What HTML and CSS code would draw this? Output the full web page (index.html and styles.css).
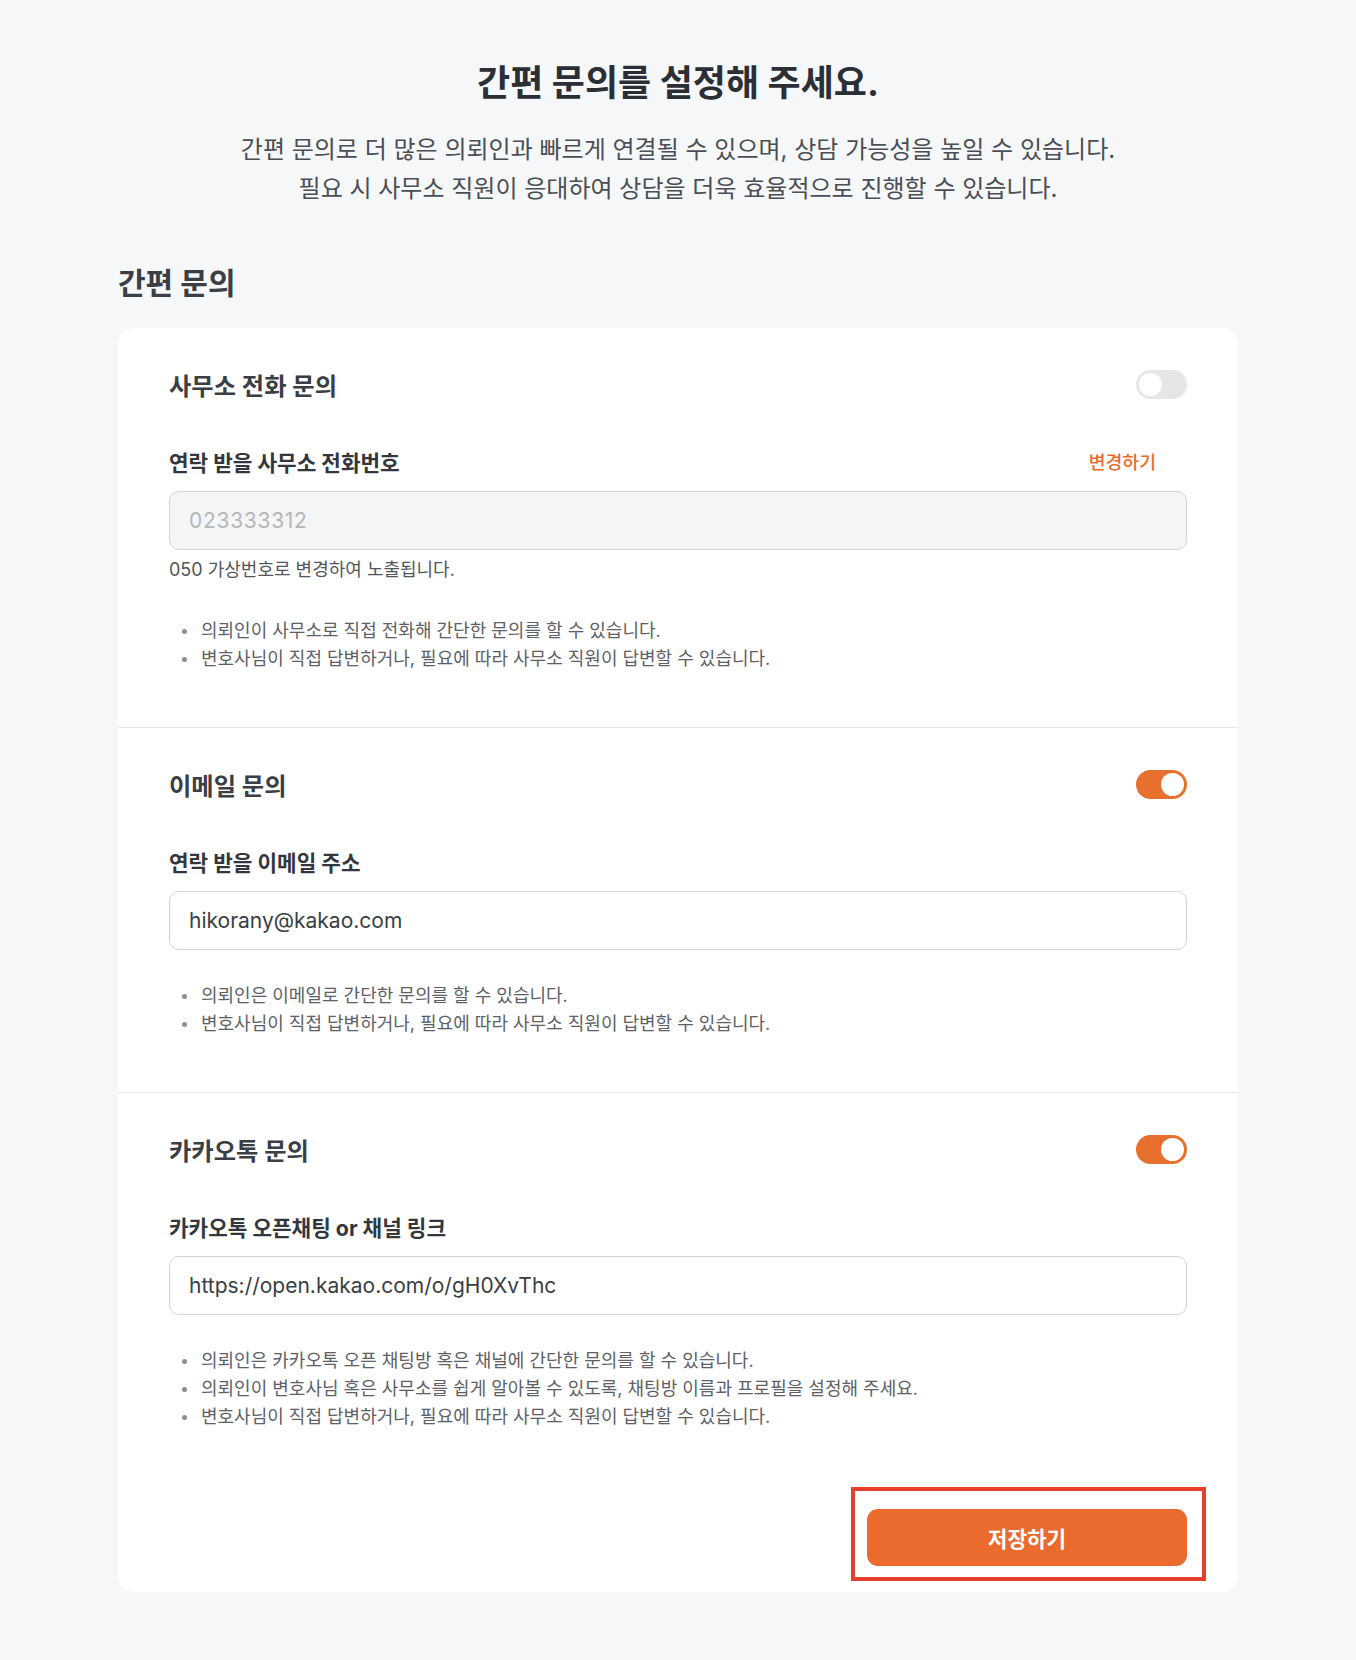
FILE: index.html
```html
<!DOCTYPE html>
<html lang="ko">
<head>
  <meta charset="UTF-8">
  <meta name="viewport" content="width=device-width, initial-scale=1.0">
  <title>간편 문의 설정</title>
  <link rel="stylesheet" href="styles.css">
</head>
<body>
  <main class="page">
    <header class="intro">
      <h1>간편 문의를 설정해 주세요.</h1>
      <p>간편 문의로 더 많은 의뢰인과 빠르게 연결될 수 있으며, 상담 가능성을 높일 수 있습니다.<br>
        필요 시 사무소 직원이 응대하여 상담을 더욱 효율적으로 진행할 수 있습니다.</p>
    </header>

    <h2 class="group-title">간편 문의</h2>

    <section class="card">
      <div class="channel">
        <div class="channel-head">
          <h3>사무소 전화 문의</h3>
          <span class="toggle"></span>
        </div>
        <div class="field-label">
          <span>연락 받을 사무소 전화번호</span>
          <a href="#" class="change-link">변경하기</a>
        </div>
        <input class="field-input" type="text" value="023333312" disabled>
        <p class="helper">050 가상번호로 변경하여 노출됩니다.</p>
        <ul class="notes">
          <li>의뢰인이 사무소로 직접 전화해 간단한 문의를 할 수 있습니다.</li>
          <li>변호사님이 직접 답변하거나, 필요에 따라 사무소 직원이 답변할 수 있습니다.</li>
        </ul>
      </div>

      <div class="channel">
        <div class="channel-head">
          <h3>이메일 문의</h3>
          <span class="toggle on"></span>
        </div>
        <div class="field-label">
          <span>연락 받을 이메일 주소</span>
        </div>
        <input class="field-input" type="text" value="hikorany@kakao.com">
        <ul class="notes">
          <li>의뢰인은 이메일로 간단한 문의를 할 수 있습니다.</li>
          <li>변호사님이 직접 답변하거나, 필요에 따라 사무소 직원이 답변할 수 있습니다.</li>
        </ul>
      </div>

      <div class="channel last">
        <div class="channel-head">
          <h3>카카오톡 문의</h3>
          <span class="toggle on"></span>
        </div>
        <div class="field-label">
          <span>카카오톡 오픈채팅 or 채널 링크</span>
        </div>
        <input class="field-input" type="text" value="https://open.kakao.com/o/gH0XvThc">
        <ul class="notes">
          <li>의뢰인은 카카오톡 오픈 채팅방 혹은 채널에 간단한 문의를 할 수 있습니다.</li>
          <li>의뢰인이 변호사님 혹은 사무소를 쉽게 알아볼 수 있도록, 채팅방 이름과 프로필을 설정해 주세요.</li>
          <li>변호사님이 직접 답변하거나, 필요에 따라 사무소 직원이 답변할 수 있습니다.</li>
        </ul>
      </div>

      <div class="actions">
        <button class="save-btn">저장하기</button>
      </div>
    </section>
  </main>
</body>
</html>
```

FILE: styles.css
```css
* {
  margin: 0;
  padding: 0;
  box-sizing: border-box;
}

body {
  font-family: Inter, "Noto Sans CJK KR", sans-serif;
  background-color: #f6f7f9;
  color: #33373d;
  min-height: 100vh;
}

.page {
  width: 1120px;
  margin: 0 auto;
  padding: 61px 0 66px;
}

.intro {
  text-align: center;
}

.intro h1 {
  font-size: 36px;
  line-height: 44px;
  font-weight: 700;
  color: #2b2f35;
  margin-bottom: 25px;
}

.intro p {
  font-size: 24px;
  line-height: 39px;
  color: #4a4e55;
}

.group-title {
  font-size: 30px;
  line-height: 38px;
  font-weight: 700;
  color: #3a3e45;
  margin: 56px 0 26px;
}

.card {
  background: #ffffff;
  border-radius: 16px;
}

.channel {
  padding: 40px 51px 54px;
  border-bottom: 1px solid #e8e9eb;
}

.channel.last {
  border-bottom: none;
  padding-bottom: 0;
}

.channel-head {
  display: flex;
  align-items: center;
  justify-content: space-between;
  height: 32px;
  margin-bottom: 48px;
}

.channel-head h3 {
  font-size: 24.3px;
  font-weight: 700;
  color: #3a3e45;
}

/* toggle switch */
.toggle {
  width: 51px;
  height: 29px;
  border-radius: 15px;
  background: #e6e6e6;
  padding: 3px;
  display: flex;
  justify-content: flex-start;
}

.toggle::after {
  content: "";
  width: 23px;
  height: 23px;
  border-radius: 50%;
  background: #ffffff;
}

.toggle.on {
  background: #e8702f;
  justify-content: flex-end;
}

.field-label {
  display: flex;
  align-items: center;
  justify-content: space-between;
  height: 26px;
  margin-bottom: 17px;
  font-size: 21.3px;
  font-weight: 700;
  color: #33373d;
}

.change-link {
  font-size: 18.3px;
  font-weight: 500;
  color: #ec6a2b;
  text-decoration: none;
  margin-right: 31px;
}

.field-input {
  display: block;
  width: 100%;
  height: 59px;
  padding: 0 19px;
  border: 1px solid #d3d4d7;
  border-radius: 10px;
  background: #ffffff;
  font-family: Inter, "Noto Sans CJK KR", sans-serif;
  font-size: 21px;
  color: #3a3e45;
  outline: none;
}

.field-input:disabled {
  background: #f4f5f6;
  color: #b5b6b9;
  -webkit-text-fill-color: #b5b6b9;
  letter-spacing: 0.7px;
  opacity: 1;
}

.helper {
  margin-top: 8px;
  font-size: 18px;
  line-height: 24px;
  color: #52565c;
}

.notes {
  list-style: none;
  margin-top: 32px;
}

.helper + .notes {
  margin-top: 35px;
}

.notes li {
  display: flex;
  align-items: center;
  font-size: 18px;
  line-height: 28px;
  color: #5d6167;
}

.notes li::before {
  content: "";
  flex: none;
  width: 5px;
  height: 5px;
  border-radius: 50%;
  background: #8a8d92;
  margin: 0 14px 0 13px;
}

.actions {
  display: flex;
  justify-content: flex-end;
  padding: 78px 51px 26px;
}

.save-btn {
  position: relative;
  width: 320px;
  height: 57px;
  border: none;
  border-radius: 11px;
  background: #ea6b2d;
  color: #ffffff;
  font-family: Inter, "Noto Sans CJK KR", sans-serif;
  font-size: 21.3px;
  font-weight: 700;
  cursor: pointer;
}

/* highlight frame drawn around the save button */
.save-btn::after {
  content: "";
  position: absolute;
  top: -22px;
  right: -19px;
  bottom: -15px;
  left: -16px;
  border: 4px solid #e4402b;
  pointer-events: none;
}
```
